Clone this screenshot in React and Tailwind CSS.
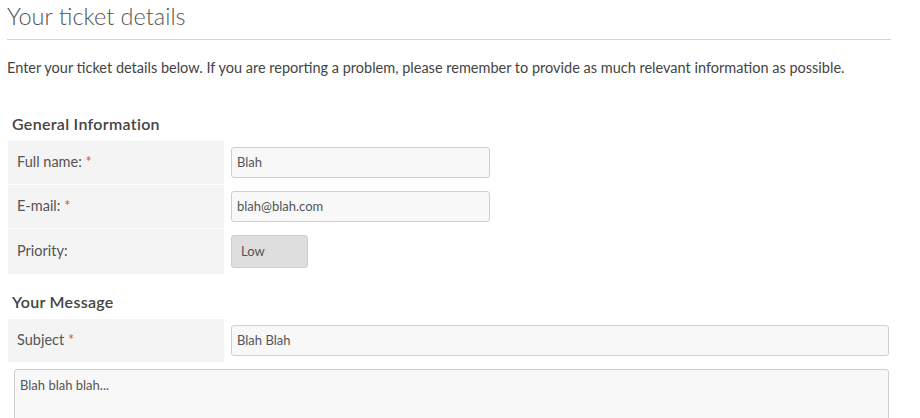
import * as React from "react"

function Req() {
  return <span className="text-[#d9534f]"> *</span>
}

function Row({ label, required, children }) {
  return (
    <div className="flex items-stretch gap-[7px]">
      <div className="w-[216px] shrink-0 bg-[#f4f4f4] pl-[9px] flex items-center text-[14.5px] text-[#555]">
        <span>
          {label}
          {required && <Req />}
        </span>
      </div>
      <div className="flex-1 flex items-center py-[6px]">{children}</div>
    </div>
  )
}

const inputCls =
  "h-[31px] rounded-[3px] border border-[#ccd0d2] bg-[#f8f8f8] px-[5px] text-[13px] text-[#555] outline-none"

export default function App() {
  return (
    <div className="w-[920px] h-[418px] overflow-hidden bg-white font-['Lato',sans-serif] text-[#444]">
      <div className="pl-[7px] pr-[29px]">
        <h1 className="text-[23.5px] font-light text-[#555] leading-[32px]">Your ticket details</h1>
        <hr className="mt-[7px] border-t border-[#d5d5d5]" />
        <p className="mt-[17px] text-[14.5px] text-[#444]">
          Enter your ticket details below. If you are reporting a problem, please remember to provide as much relevant information as possible.
        </p>

        <h2 className="mt-[33px] pl-[5px] text-[16px] tracking-[0.3px] font-semibold text-[#444]">General Information</h2>

        <div className="mt-[5px] flex flex-col gap-[1px] pl-[1px] pr-[2px]">
          <Row label="Full name:" required>
            <input defaultValue="Blah" className={"w-[259px] " + inputCls} />
          </Row>
          <Row label="E-mail:" required>
            <input defaultValue="blah@blah.com" className={"w-[259px] " + inputCls} />
          </Row>
          <Row label="Priority:">
            <div className="w-[77px] h-[33px] rounded-[3px] border border-[#cfcfcf] bg-[#dedede] pl-[9px] flex items-center text-[13px] text-[#555]">
              Low
            </div>
          </Row>
        </div>

        <h2 className="mt-[16px] pl-[5px] text-[16px] tracking-[0.3px] font-semibold text-[#444]">Your Message</h2>

        <div className="mt-[5px] flex flex-col gap-[7px] pl-[1px] pr-[2px]">
          <Row label="Subject" required>
            <input defaultValue="Blah Blah" className={"w-full " + inputCls} />
          </Row>
          <div className="pl-[6px]">
            <textarea
              defaultValue="Blah blah blah..."
              className="block w-full h-[80px] resize-none rounded-[3px] border border-[#ccd0d2] bg-[#f8f8f8] px-[5px] py-[6px] text-[13px] text-[#555] outline-none"
            />
          </div>
        </div>
      </div>
    </div>
  )
}
